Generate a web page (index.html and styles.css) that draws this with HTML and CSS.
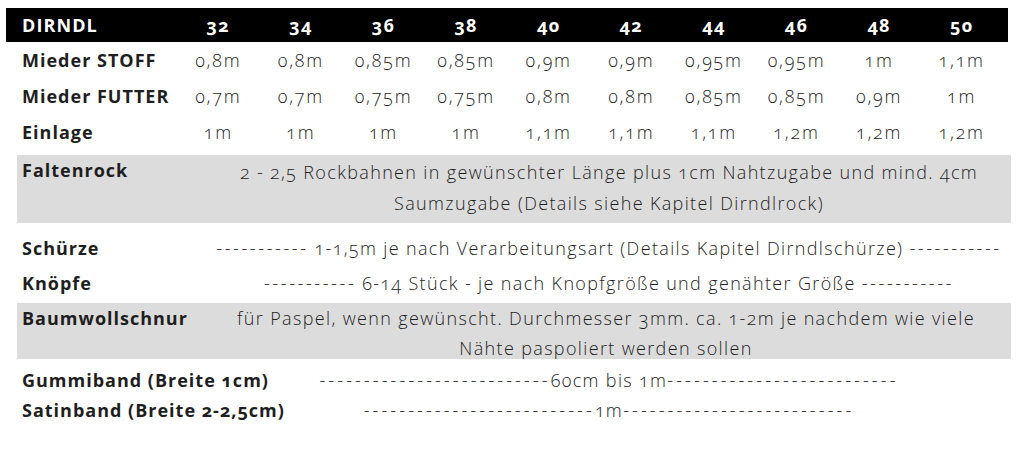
FILE: index.html
```html
<!DOCTYPE html>
<html lang="de">
<head>
<meta charset="utf-8">
<title>Dirndl Materialbedarf</title>
<link rel="stylesheet" href="styles.css">
</head>
<body>
<div class="page">
  <div class="sizes">
    <div class="row head">
      <div class="label">DIRNDL</div>
      <div class="cell">32</div><div class="cell">34</div><div class="cell">36</div><div class="cell">38</div><div class="cell">40</div>
      <div class="cell">42</div><div class="cell">44</div><div class="cell">46</div><div class="cell">48</div><div class="cell">50</div>
    </div>
    <div class="row r1">
      <div class="label">Mieder STOFF</div>
      <div class="cell">0,8m</div><div class="cell">0,8m</div><div class="cell">0,85m</div><div class="cell">0,85m</div><div class="cell">0,9m</div>
      <div class="cell">0,9m</div><div class="cell">0,95m</div><div class="cell">0,95m</div><div class="cell">1m</div><div class="cell">1,1m</div>
    </div>
    <div class="row r2">
      <div class="label">Mieder FUTTER</div>
      <div class="cell">0,7m</div><div class="cell">0,7m</div><div class="cell">0,75m</div><div class="cell">0,75m</div><div class="cell">0,8m</div>
      <div class="cell">0,8m</div><div class="cell">0,85m</div><div class="cell">0,85m</div><div class="cell">0,9m</div><div class="cell">1m</div>
    </div>
    <div class="row r3">
      <div class="label">Einlage</div>
      <div class="cell">1m</div><div class="cell">1m</div><div class="cell">1m</div><div class="cell">1m</div><div class="cell">1,1m</div>
      <div class="cell">1,1m</div><div class="cell">1,1m</div><div class="cell">1,2m</div><div class="cell">1,2m</div><div class="cell">1,2m</div>
    </div>
  </div>

  <div class="note shaded falten">
    <div class="label">Faltenrock</div>
    <div class="text">2 - 2,5 Rockbahnen in gewünschter Länge plus 1cm Nahtzugabe und mind. 4cm Saumzugabe (Details siehe Kapitel Dirndlrock)</div>
  </div>

  <div class="note plain first">
    <div class="label">Schürze</div>
    <div class="text"><span class="dash">-----------</span> 1-1,5m je nach Verarbeitungsart (Details Kapitel Dirndlschürze) <span class="dash">-----------</span></div>
  </div>
  <div class="note plain">
    <div class="label">Knöpfe</div>
    <div class="text"><span class="dash">-----------</span> 6-14 Stück - je nach Knopfgröße und genähter Größe <span class="dash">-----------</span></div>
  </div>

  <div class="note shaded schnur">
    <div class="label">Baumwollschnur</div>
    <div class="text">für Paspel, wenn gewünscht. Durchmesser 3mm. ca. 1-2m je nachdem wie viele Nähte paspoliert werden sollen</div>
  </div>

  <div class="note plain band first">
    <div class="label">Gummiband (Breite 1cm)</div>
    <div class="text"><span class="dash">--------------------------</span>60cm bis 1m<span class="dash">--------------------------</span></div>
  </div>
  <div class="note plain band">
    <div class="label">Satinband (Breite 2-2,5cm)</div>
    <div class="text"><span class="dash">--------------------------</span>1m<span class="dash">--------------------------</span></div>
  </div>
</div>
</body>
</html>
```

FILE: styles.css
```css
html, body {
  margin: 0;
  padding: 0;
  background: #ffffff;
}

.page {
  padding: 8px 15px 0 6px;
  font-family: "Open Sans", "Liberation Sans", sans-serif;
  color: #1e1e1e;
  font-variant-numeric: oldstyle-nums;
}

.sizes {
  display: flex;
  flex-direction: column;
}

.row {
  display: grid;
  grid-template-columns: 171px repeat(10, 1fr);
  padding-right: 5px;
  align-items: center;
}

.row .label {
  padding-left: 16px;
  font-weight: 700;
  font-size: 18px;
  letter-spacing: 1px;
  white-space: nowrap;
}

.row .cell {
  text-align: center;
  font-weight: 300;
  font-size: 18px;
  letter-spacing: 1.8px;
}

.row.head {
  background: #000000;
  color: #ffffff;
  height: 34px;
}

.row.head .label {
  font-size: 18px;
  letter-spacing: 1.1px;
}

.row.head .cell {
  font-weight: 700;
  font-size: 18px;
  letter-spacing: 1.3px;
}

.row.r1, .row.r2, .row.r3 {
  height: 36px;
}

.note {
  display: grid;
  grid-template-columns: 190px 1fr;
  margin-left: 11px;
  margin-right: -3px;
}

.note .label {
  padding-left: 5px;
  font-weight: 700;
  font-size: 18px;
  letter-spacing: 1px;
  white-space: nowrap;
}

.note .text {
  text-align: center;
  font-weight: 300;
  font-size: 18px;
  letter-spacing: 1.35px;
}

.dash {
  letter-spacing: 2.6px;
}

.note.shaded {
  background: #dcdcdc;
}

.note.falten {
  margin-top: 5px;
  height: 68px;
  line-height: 31px;
  padding-top: 2px;
  box-sizing: border-box;
}

.note.falten .label {
  line-height: 26px;
}

.note.plain {
  height: 35px;
  align-items: center;
}

.note.plain.first {
  margin-top: 7px;
}

.note.schnur {
  margin-top: 3px;
  height: 56px;
  line-height: 30px;
  box-sizing: border-box;
}

.note.schnur .text {
  padding: 0 22px 0 16px;
}

.note.band {
  grid-template-columns: 280px 1fr;
  height: 30px;
}

.note.band.first {
  margin-top: 6px;
}

.note.band .text {
  padding-right: 90px;
}

.note.band .dash {
  letter-spacing: 3.1px;
}
```
